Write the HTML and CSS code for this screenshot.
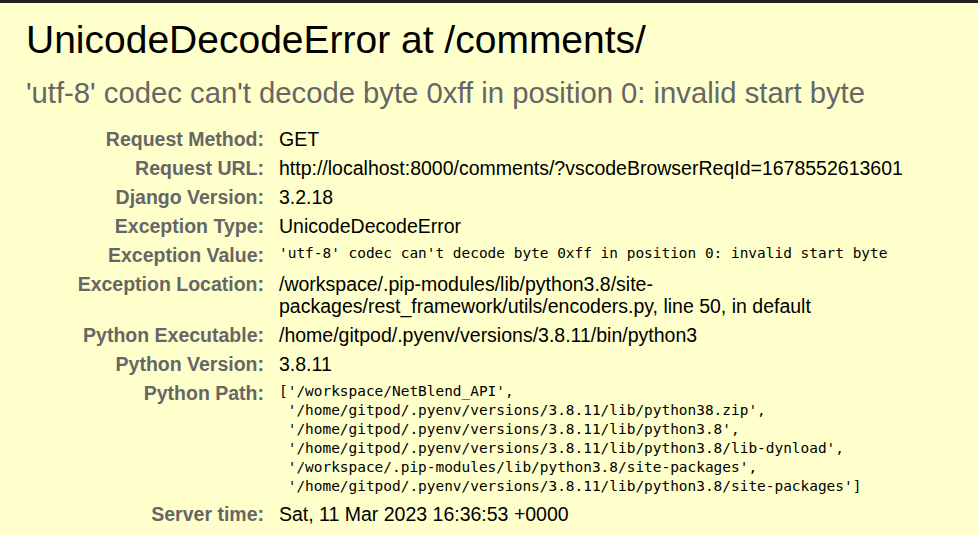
FILE: index.html
```html
<!DOCTYPE html>
<html>
<head>
<meta charset="utf-8">
<title>UnicodeDecodeError at /comments/</title>
<link rel="stylesheet" href="styles.css">
</head>
<body>
<div class="topbar"></div>
<div class="summary">
  <h1 class="title">UnicodeDecodeError at /comments/</h1>
  <h2 class="subtitle">'utf-8' codec can't decode byte 0xff in position 0: invalid start byte</h2>
  <table class="meta">
    <tr><th>Request Method:</th><td>GET</td></tr>
    <tr><th>Request URL:</th><td>http://localhost:8000/comments/?vscodeBrowserReqId=1678552613601</td></tr>
    <tr><th>Django Version:</th><td>3.2.18</td></tr>
    <tr><th>Exception Type:</th><td>UnicodeDecodeError</td></tr>
    <tr><th>Exception Value:</th><td><pre class="mono">'utf-8' codec can't decode byte 0xff in position 0: invalid start byte</pre></td></tr>
    <tr><th>Exception Location:</th><td>/workspace/.pip-modules/lib/python3.8/site-<br>packages/rest_framework/utils/encoders.py, line 50, in default</td></tr>
    <tr><th>Python Executable:</th><td>/home/gitpod/.pyenv/versions/3.8.11/bin/python3</td></tr>
    <tr><th>Python Version:</th><td>3.8.11</td></tr>
    <tr><th>Python Path:</th><td><pre class="mono">['/workspace/NetBlend_API',
 '/home/gitpod/.pyenv/versions/3.8.11/lib/python38.zip',
 '/home/gitpod/.pyenv/versions/3.8.11/lib/python3.8',
 '/home/gitpod/.pyenv/versions/3.8.11/lib/python3.8/lib-dynload',
 '/workspace/.pip-modules/lib/python3.8/site-packages',
 '/home/gitpod/.pyenv/versions/3.8.11/lib/python3.8/site-packages']</pre></td></tr>
    <tr><th>Server time:</th><td>Sat, 11 Mar 2023 16:36:53 +0000</td></tr>
  </table>
</div>
</body>
</html>
```

FILE: styles.css
```css
html, body {
  margin: 0;
  padding: 0;
}
body {
  background: #ffffcc;
  color: #000;
  font-family: "Liberation Sans", Arial, sans-serif;
  font-size: 19.5px;
}
.topbar {
  height: 3px;
  background: #222;
}
.summary {
  padding: 14px 28px 0 26px;
  background: #ffffcc;
}
.title {
  margin: 0;
  font-size: 39px;
  font-weight: normal;
  line-height: 45px;
}
.subtitle {
  margin: 14px 0 14.5px 0;
  font-size: 29.25px;
  font-weight: normal;
  color: #666;
  line-height: 34px;
}
.meta {
  border-collapse: collapse;
  margin-left: 0;
}
.meta th {
  width: 235px;
  text-align: right;
  vertical-align: top;
  color: #666;
  font-weight: bold;
  padding: 3.5px 12px 3.5px 3px;
  line-height: 22px;
  white-space: nowrap;
}
.meta td {
  vertical-align: top;
  padding: 3.5px 3px;
  line-height: 22px;
}
.mono {
  margin: 0;
  font-family: "DejaVu Sans Mono", "Liberation Mono", monospace;
  font-size: 14.45px;
  line-height: 19px;
  white-space: pre-wrap;
}
```
